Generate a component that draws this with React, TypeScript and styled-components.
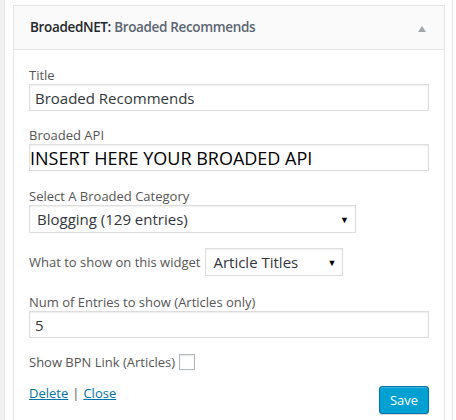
import React from "react";
import styled, { createGlobalStyle } from "styled-components";

const Global = createGlobalStyle`
  html, body { margin: 0; padding: 0; background: #fff; }
  body { font-family: "Open Sans", "Noto Sans", sans-serif; font-size: 13px; color: #444; }
  * { box-sizing: border-box; }
`;

const Sidebar = styled.div`
  margin: 0 0 0 4px;
  width: 449px;
  min-height: 420px;
  border-left: 1px solid #e5e5e5;
  border-right: 1px solid #e5e5e5;
  background: #fff;
  padding: 5px 8px 0 8px;
  box-shadow: -4px 0 0 #f1f1f1;
`;

const Widget = styled.div`
  width: 432px;
  min-height: 420px;
  border: 1px solid #e5e5e5;
  border-bottom: none;
  background: #fff;
`;

const Header = styled.div`
  height: 44px;
  background: #fafafa;
  border-bottom: 1px solid #e5e5e5;
  display: flex;
  align-items: center;
  justify-content: space-between;
  padding: 0 18px 0 16px;
`;

const HeaderTitle = styled.h3`
  margin: 0;
  font-size: 13.5px;
  font-weight: 600;
  color: #23282d;
  line-height: 1;
  letter-spacing: -0.35px;
`;

const InTitle = styled.span`
  color: #5b6573;
`;

const Toggle = styled.span`
  width: 0;
  height: 0;
  border-left: 4px solid transparent;
  border-right: 4px solid transparent;
  border-bottom: 6px solid #a0a5aa;
  margin-top: 2px;
`;

const Inside = styled.div`
  padding: 16px 16px 0 15px;
  display: flex;
  flex-direction: column;
`;

const Field = styled.div<{ $gap?: number }>`
  display: flex;
  flex-direction: column;
  margin-bottom: ${(p) => p.$gap ?? 15}px;
`;

const Label = styled.label`
  display: block;
  line-height: 18px;
  color: #555;
  font-size: 13px;
`;

const TextInput = styled.input<{ $big?: boolean }>`
  width: 400px;
  height: 27px;
  border: 1px solid #ddd;
  box-shadow: inset 0 1px 2px rgba(0, 0, 0, 0.07);
  background: #fff;
  font-family: "Open Sans", "Noto Sans", sans-serif;
  font-size: ${(p) => (p.$big ? "18px" : "15px")};
  color: ${(p) => (p.$big ? "#000" : "#32373c")};
  padding: ${(p) => (p.$big ? "0 0 0 0" : "0 0 0 5px")};
  margin: 0;
  outline: none;
`;

const FakeSelect = styled.div<{ $width: number }>`
  width: ${(p) => p.$width}px;
  height: 28px;
  border: 1px solid #ddd;
  box-shadow: inset 0 1px 2px rgba(0, 0, 0, 0.07);
  background: #fff;
  display: flex;
  align-items: center;
  justify-content: space-between;
  padding: 0 6px 0 7px;
  font-size: 15px;
  color: #32373c;
`;

const Arrow = styled.span`
  font-size: 9px;
  color: #000;
  line-height: 1;
`;

const InlineRow = styled.div`
  display: flex;
  align-items: center;
  gap: 5px;
  margin-bottom: 17px;
`;

const InlineLabel = styled.span`
  color: #555;
  font-size: 13px;
`;

const CheckRow = styled.div`
  display: flex;
  align-items: center;
  gap: 4px;
  margin-bottom: 12px;
`;

const Checkbox = styled.span`
  width: 16px;
  height: 16px;
  border: 1px solid #b4b9be;
  background: #fff;
  box-shadow: inset 0 1px 2px rgba(0, 0, 0, 0.1);
`;

const Actions = styled.div`
  display: flex;
  justify-content: space-between;
  align-items: flex-start;
  width: 400px;
`;

const Links = styled.div`
  display: flex;
  gap: 4px;
  color: #555;
  padding-top: 1px;
`;

const LinkA = styled.a`
  color: #0073aa;
  text-decoration: underline;
  cursor: pointer;
`;

const SaveButton = styled.button`
  width: 50px;
  height: 28px;
  margin-top: 3px;
  background: #00a0d2;
  border: 1px solid #0073aa;
  border-radius: 3px;
  box-shadow: inset 0 1px 0 rgba(120, 200, 230, 0.5), 0 1px 0 rgba(0, 0, 0, 0.15);
  color: #fff;
  font-family: "Open Sans", "Noto Sans", sans-serif;
  font-size: 13px;
  padding: 0;
`;

export default function App() {
  return (
    <>
      <Global />
      <Sidebar>
        <Widget>
          <Header>
            <HeaderTitle>
              BroadedNET: <InTitle>Broaded Recommends</InTitle>
            </HeaderTitle>
            <Toggle />
          </Header>
          <Inside>
            <Field>
              <Label>Title</Label>
              <TextInput defaultValue="Broaded Recommends" />
            </Field>
            <Field $gap={16}>
              <Label>Broaded API</Label>
              <TextInput $big defaultValue="INSERT HERE YOUR BROADED API" />
            </Field>
            <Field>
              <Label>Select A Broaded Category</Label>
              <FakeSelect $width={327}>
                <span>Blogging (129 entries)</span>
                <Arrow>▼</Arrow>
              </FakeSelect>
            </Field>
            <InlineRow>
              <InlineLabel>What to show on this widget</InlineLabel>
              <FakeSelect $width={138}>
                <span>Article Titles</span>
                <Arrow>▼</Arrow>
              </FakeSelect>
            </InlineRow>
            <Field>
              <Label>Num of Entries to show (Articles only)</Label>
              <TextInput defaultValue="5" />
            </Field>
            <CheckRow>
              <InlineLabel>Show BPN Link (Articles)</InlineLabel>
              <Checkbox />
            </CheckRow>
            <Actions>
              <Links>
                <LinkA>Delete</LinkA>
                <span>|</span>
                <LinkA>Close</LinkA>
              </Links>
              <SaveButton>Save</SaveButton>
            </Actions>
          </Inside>
        </Widget>
      </Sidebar>
    </>
  );
}
